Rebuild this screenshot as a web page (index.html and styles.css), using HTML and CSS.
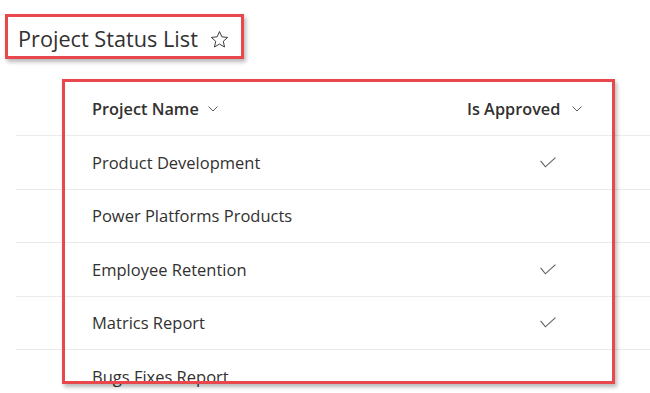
FILE: index.html
```html
<!DOCTYPE html>
<html lang="en">
<head>
<meta charset="utf-8">
<title>Project Status List</title>
<link rel="stylesheet" href="styles.css">
</head>
<body>
<div class="page">
  <header class="titlebar">
    <h1 class="title">Project Status List</h1>
    <svg class="star" viewBox="0 0 20 20" width="19" height="19" aria-hidden="true">
      <path d="M10 1.6 L12.5 7.2 L18.6 7.8 L14 11.9 L15.3 17.9 L10 14.8 L4.7 17.9 L6 11.9 L1.4 7.8 L7.5 7.2 Z" fill="none" stroke="#323130" stroke-width="1" stroke-linejoin="round"/>
    </svg>
  </header>

  <div class="list">
    <div class="row head">
      <div class="cell name">Project Name
        <svg class="chev" viewBox="0 0 10 6" width="10" height="6"><path d="M0.5 0.5 L5 5 L9.5 0.5" fill="none" stroke="#605e5c" stroke-width="1"/></svg>
      </div>
      <div class="cell approved">Is Approved
        <svg class="chev" viewBox="0 0 10 6" width="10" height="6"><path d="M0.5 0.5 L5 5 L9.5 0.5" fill="none" stroke="#605e5c" stroke-width="1"/></svg>
      </div>
    </div>
    <div class="row">
      <div class="cell name">Product Development</div>
      <div class="cell check"><svg viewBox="0 0 16 11" width="16" height="11"><path d="M0.6 3.8 L5.4 9.8 L15.4 0.6" fill="none" stroke="#605e5c" stroke-width="1.1"/></svg></div>
    </div>
    <div class="row">
      <div class="cell name">Power Platforms Products</div>
      <div class="cell check"></div>
    </div>
    <div class="row">
      <div class="cell name">Employee Retention</div>
      <div class="cell check"><svg viewBox="0 0 16 11" width="16" height="11"><path d="M0.6 3.8 L5.4 9.8 L15.4 0.6" fill="none" stroke="#605e5c" stroke-width="1.1"/></svg></div>
    </div>
    <div class="row">
      <div class="cell name">Matrics Report</div>
      <div class="cell check"><svg viewBox="0 0 16 11" width="16" height="11"><path d="M0.6 3.8 L5.4 9.8 L15.4 0.6" fill="none" stroke="#605e5c" stroke-width="1.1"/></svg></div>
    </div>
    <div class="row">
      <div class="cell name">Bugs Fixes Report</div>
      <div class="cell check"></div>
    </div>
  </div>

  <div class="mark mark-title"></div>
  <div class="mark mark-table"></div>
</div>
</body>
</html>
```

FILE: styles.css
```css
html, body {
  margin: 0;
  padding: 0;
  background: #ffffff;
}

body {
  font-family: "Open Sans", "Noto Sans", sans-serif;
  color: #323130;
  overflow: hidden;
}

.page {
  position: relative;
  width: 650px;
  height: 393px;
  overflow: hidden;
}

.titlebar {
  display: flex;
  align-items: center;
  gap: 12px;
  padding: 24px 0 0 18px;
  height: 30px;
}

.title {
  margin: 0;
  font-size: 21.7px;
  font-weight: 400;
  line-height: 30px;
  color: #323130;
}

.star {
  display: block;
  margin-top: 1px;
}

.list {
  margin: 28px 0 0 16px;
}

.row {
  display: flex;
  align-items: center;
  height: 52.5px;
  border-bottom: 1px solid #edebe9;
  font-size: 16.5px;
}

.row.head {
  height: 53px;
  font-size: 16.3px;
  font-weight: 600;
}

.cell {
  display: flex;
  align-items: center;
}

.cell.name {
  width: 375px;
  padding-left: 76px;
  gap: 9px;
}

.cell.approved {
  gap: 12px;
}

.cell.check {
  padding-left: 73px;
}

.cell svg {
  display: block;
}

.chev {
  margin-top: 1px;
}

.mark {
  position: absolute;
  border: 3px solid #e8474c;
  box-sizing: border-box;
  box-shadow: 2px 3px 4px rgba(0, 0, 0, 0.28);
  pointer-events: none;
}

.mark-title {
  left: 5px;
  top: 14px;
  width: 239px;
  height: 45px;
}

.mark-table {
  left: 62px;
  top: 79px;
  width: 553px;
  height: 305px;
}
```
